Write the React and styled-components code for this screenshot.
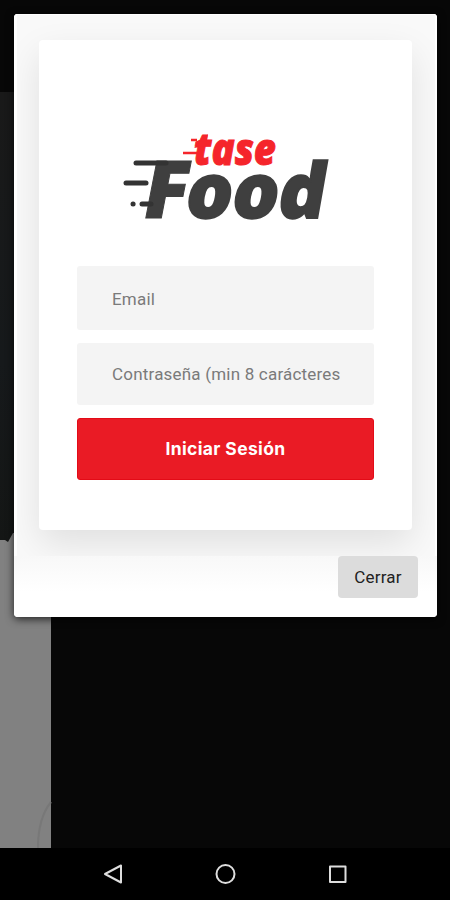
import styled, { createGlobalStyle } from "styled-components";

const GlobalStyle = createGlobalStyle`
  * {
    box-sizing: border-box;
  }

  body {
    margin: 0;
    background: #070707;
    font-family: Roboto, "Liberation Sans", sans-serif;
  }
`;

const Screen = styled.div`
  position: relative;
  display: flex;
  flex-direction: column;
  width: 450px;
  height: 900px;
  overflow: hidden;
  background: #070707;
`;

const Main = styled.main`
  flex: 1;
  padding: 14px 13px 0 14px;
`;

/* the dimmed page that stays visible behind the modal */
const Backdrop = styled.svg`
  position: absolute;
  top: 0;
  left: 0;
`;

const Modal = styled.section`
  position: relative;
  height: 603px;
  overflow: hidden;
  border-radius: 4px;
  background: white;
`;

const ModalShadow = styled.div`
  position: relative;
  border-radius: 4px;
  box-shadow: 0 2px 9px rgba(0, 0, 0, 0.75);
`;

const ModalBody = styled.div`
  height: 542px;
  padding: 25px 23px 0 22px;
  overflow: hidden;
  border: solid white;
  border-width: 1px 2px 0 3px;
  background: #f9f9f9;
`;

const Card = styled.form`
  display: flex;
  flex-direction: column;
  height: 490px;
  padding: 88px 38px 0;
  border-radius: 4px;
  background: white;
  box-shadow: 0 14px 36px rgba(0, 0, 0, 0.1);
`;

const Logo = styled.svg`
  align-self: center;
  flex-shrink: 0;
  margin-bottom: 38px;
  overflow: visible;
`;

const Field = styled.input`
  width: 100%;
  height: ${(props) => props.$height}px;
  flex-shrink: 0;
  margin-bottom: 13px;
  padding: ${(props) => props.$offset || 0}px 34px 0 35px;
  border: none;
  border-radius: 3px;
  outline: none;
  background: #f4f4f4;
  font-family: inherit;
  font-size: 17px;
  letter-spacing: 0.2px;

  &::placeholder {
    color: #7a7a7a;
    opacity: 1;
  }
`;

const SubmitButton = styled.button`
  height: 62px;
  flex-shrink: 0;
  padding: 0 0 2px;
  border: 1px solid #e30b17;
  border-radius: 3px;
  background: #ea1b25;
  color: white;
  font-family: Inter, sans-serif;
  font-size: 17.5px;
  font-weight: 700;
  letter-spacing: 0.35px;
`;

const ModalFooter = styled.div`
  display: flex;
  justify-content: flex-end;
  height: 61px;
  padding-right: 19px;
  background: linear-gradient(#f8f8f8, #ffffff 36px);
`;

const CloseButton = styled.button`
  width: 80px;
  height: 42px;
  padding: 0 0 1px;
  border: none;
  border-radius: 4px;
  background: #dcdcdc;
  color: #222;
  font-family: inherit;
  font-size: 17px;
  letter-spacing: 0.2px;
`;

const NavBar = styled.nav`
  position: relative;
  display: flex;
  align-items: center;
  justify-content: center;
  gap: 88px;
  height: 52px;
  background: black;
`;

const NavIcon = styled.svg`
  width: 24px;
  height: 24px;
  fill: none;
  stroke: #dedede;
  stroke-width: 2;
  stroke-linejoin: round;
`;

function PageBehind() {
  return (
    <Backdrop width="450" height="848" viewBox="0 0 450 848">
      <defs>
        <linearGradient id="photo" x1="0" y1="0" x2="0" y2="1">
          <stop offset="0" stopColor="#191919" />
          <stop offset="0.6" stopColor="#16191b" />
          <stop offset="1" stopColor="#141615" />
        </linearGradient>
      </defs>
      <rect y="92" width="51" height="450" fill="url(#photo)" />
      <path d="M0 540H5L8 542L13 533H51V848H0Z" fill="#818181" />
      <path d="M51 802Q38 818 38 848" fill="none" stroke="#787878" strokeWidth="2" />
    </Backdrop>
  );
}

function FoodLogo() {
  return (
    <Logo width="210" height="100" viewBox="120 128 210 100">
      <g fontFamily="Open Sans, sans-serif" fontWeight="800">
        <g fill="#3f3f3f" stroke="#3f3f3f">
          <text
            transform="translate(138.5 218) skewX(-11)"
            fontSize="80"
            strokeWidth="1"
            textLength="44"
            lengthAdjust="spacingAndGlyphs"
          >
            F
          </text>
          <text
            transform="translate(182 217.5) skewX(-10)"
            fontSize="76"
            strokeWidth="2"
            textLength="139"
            lengthAdjust="spacingAndGlyphs"
          >
            ood
          </text>
        </g>
        <text
          x="193"
          y="165"
          fontSize="45"
          fontStyle="italic"
          textLength="82"
          lengthAdjust="spacingAndGlyphs"
          fill="#f5252b"
          stroke="#f5252b"
          strokeWidth="1"
        >
          tase
        </text>
      </g>
      <g fill="none" stroke="#333" strokeWidth="5" strokeLinecap="round">
        <path d="M135 163H165" />
        <path d="M125 183H145" />
        <path d="M141 204H150" />
        <path d="M132 204H132.1" />
      </g>
      <path d="M190 140H196M182 153H198" stroke="#f5252b" strokeWidth="2.5" />
      <path d="M193 148L207 134L205 146Z" fill="#f5252b" />
    </Logo>
  );
}

function LoginModal() {
  return (
    <ModalShadow>
      <Modal>
        <ModalBody>
          <Card>
            <FoodLogo />
            <Field $height={64} $offset={2} type="email" placeholder="Email" />
            <Field
              $height={62}
              type="password"
              placeholder="Contraseña (min 8 carácteres"
            />
            <SubmitButton type="button">Iniciar Sesión</SubmitButton>
          </Card>
        </ModalBody>
        <ModalFooter>
          <CloseButton>Cerrar</CloseButton>
        </ModalFooter>
      </Modal>
    </ModalShadow>
  );
}

function App() {
  return (
    <Screen>
      <GlobalStyle />
      <PageBehind />
      <Main>
        <LoginModal />
      </Main>
      <NavBar>
        <NavIcon viewBox="0 0 24 24">
          <path d="M4 12L20 3.5V20.5Z" />
        </NavIcon>
        <NavIcon viewBox="0 0 24 24">
          <circle cx="12.5" cy="12" r="9" />
        </NavIcon>
        <NavIcon viewBox="0 0 24 24">
          <rect x="5" y="4.5" width="15.5" height="15.5" />
        </NavIcon>
      </NavBar>
    </Screen>
  );
}

export default App;
